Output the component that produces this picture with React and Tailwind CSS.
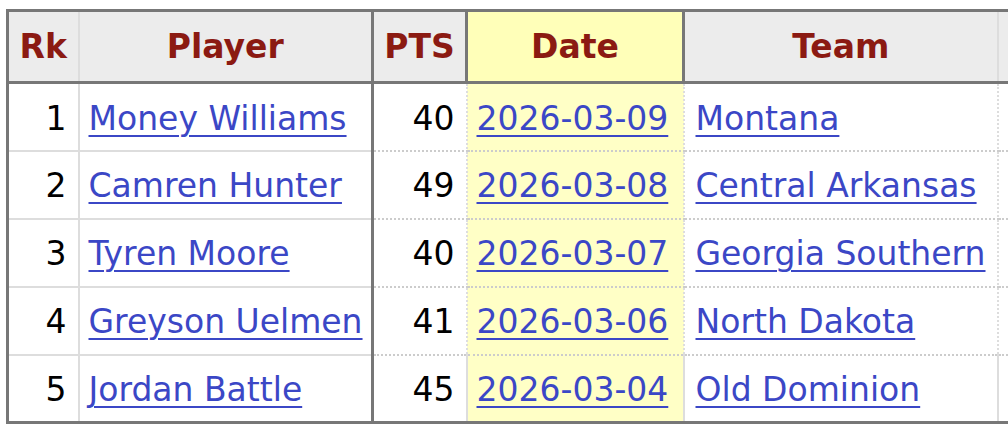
const rows = [
  { rk: 1, player: "Money Williams", pts: 40, date: "2026-03-09", team: "Montana" },
  { rk: 2, player: "Camren Hunter", pts: 49, date: "2026-03-08", team: "Central Arkansas" },
  { rk: 3, player: "Tyren Moore", pts: 40, date: "2026-03-07", team: "Georgia Southern" },
  { rk: 4, player: "Greyson Uelmen", pts: 41, date: "2026-03-06", team: "North Dakota" },
  { rk: 5, player: "Jordan Battle", pts: 45, date: "2026-03-04", team: "Old Dominion" },
];

const linkCls = "text-[#3b47c6] underline decoration-2 underline-offset-[5px]";

export default function App() {
  return (
    <div className="w-[1008px] h-[434px] overflow-hidden bg-white pt-[9px] pl-[6px] font-['DejaVu_Sans',Verdana,sans-serif] text-[33px]">
      <table className="border-collapse table-fixed w-[1110px] border-[3px] border-[#777]">
        <colgroup>
          <col className="w-[71px]" />
          <col className="w-[294px]" />
          <col className="w-[94px]" />
          <col className="w-[217px]" />
          <col className="w-[314px]" />
          <col className="w-[120px]" />
        </colgroup>
        <thead>
          <tr className="h-[72px] bg-[#ececec] text-[#8b1a12] font-bold">
            <th className="border-b-[3px] border-b-[#777] border-r-2 border-r-[#ddd] text-center">Rk</th>
            <th className="border-b-[3px] border-b-[#777] border-r-[3px] border-r-[#777] text-center">Player</th>
            <th className="border-b-[3px] border-b-[#777] border-r-2 border-r-[#ddd] text-center">PTS</th>
            <th className="border-[3px] border-[#777] bg-[#ffffb9] text-center">Date</th>
            <th className="border-b-[3px] border-b-[#777] border-r-2 border-r-[#ddd] text-center">Team</th>
            <th className="border-b-[3px] border-b-[#777]"></th>
          </tr>
        </thead>
        <tbody>
          {rows.map((r, i) => {
            const last = i === rows.length - 1;
            const rowB = last ? "" : "border-b-2 border-dotted border-b-[#ccc]";
            return (
              <tr key={r.rk} className="h-[68px] text-black">
                <td className={`text-right pr-[11px] pt-[3px] border-r-2 border-r-[#ddd] ${last ? "" : "border-b-2 border-b-[#ddd]"}`}>{r.rk}</td>
                <td className={`pl-[9px] pt-[3px] whitespace-nowrap border-r-[3px] border-r-[#777] ${last ? "" : "border-b-2 border-b-[#ddd]"}`}>
                  <a href="#" className={linkCls}>{r.player}</a>
                </td>
                <td className={`text-right pr-[11px] pt-[3px] border-r-2 border-r-[#ddd] ${rowB}`}>{r.pts}</td>
                <td className={`pl-[9px] pt-[3px] whitespace-nowrap bg-[#ffffc6] border-r-2 border-r-[#ddd] ${rowB}`}>
                  <a href="#" className={linkCls}>{r.date}</a>
                </td>
                <td className={`pl-[11px] pt-[3px] whitespace-nowrap border-r-2 border-r-[#ddd] ${rowB}`}>
                  <a href="#" className={linkCls}>{r.team}</a>
                </td>
                <td className={rowB}></td>
              </tr>
            );
          })}
        </tbody>
      </table>
    </div>
  );
}
